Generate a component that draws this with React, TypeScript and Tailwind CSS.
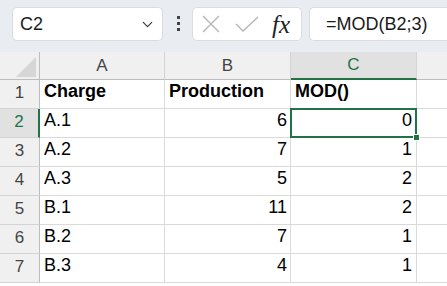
import { ChevronDown } from 'lucide-react'

const rows = [
  { a: 'Charge', b: 'Production', c: 'MOD()', head: true },
  { a: 'A.1', b: '6', c: '0' },
  { a: 'A.2', b: '7', c: '1' },
  { a: 'A.3', b: '5', c: '2' },
  { a: 'B.1', b: '11', c: '2' },
  { a: 'B.2', b: '7', c: '1' },
  { a: 'B.3', b: '4', c: '1' },
]

const cellFont = { fontFamily: '"Liberation Sans", Arial, sans-serif' }

export default function App() {
  return (
    <div className="h-[286px] w-[447px] overflow-hidden bg-white" style={cellFont}>
      {/* formula bar */}
      <div className="flex h-[52px] items-start bg-[#e9edf2] pt-[7px]">
        <div className="ml-[12px] flex h-[34px] w-[151px] items-center justify-between rounded-[5px] border border-[#d9dde2] bg-white pl-[7px] pr-[6px]">
          <span className="text-[18px] text-[#1a1a1a]">C2</span>
          <ChevronDown className="h-[17px] w-[17px] text-[#333]" strokeWidth={1.6} />
        </div>
        <div className="ml-[14px] mt-[9px] flex flex-col gap-[3px]">
          <span className="h-[3px] w-[3px] bg-[#444]" />
          <span className="h-[3px] w-[3px] bg-[#444]" />
          <span className="h-[3px] w-[3px] bg-[#444]" />
        </div>
        <div className="ml-[12px] flex h-[34px] w-[110px] items-center rounded-[5px] border border-[#d9dde2] bg-white pl-[8px]">
          <svg width="20" height="20" viewBox="0 0 20 20" className="text-[#b4b4b4]">
            <path d="M2 2L18 18M18 2L2 18" stroke="currentColor" strokeWidth="1.3" fill="none" />
          </svg>
          <svg width="26" height="18" viewBox="0 0 26 18" className="ml-[13px] text-[#b4b4b4]">
            <path d="M2 9L9 16L24 2" stroke="currentColor" strokeWidth="1.3" fill="none" />
          </svg>
          <span
            className="ml-[12px] text-[25px] italic leading-none text-[#222]"
            style={{ fontFamily: '"Liberation Serif", "Times New Roman", serif' }}
          >
            fx
          </span>
        </div>
        <div className="ml-[7px] flex h-[34px] flex-1 items-center rounded-l-[5px] border border-r-0 border-[#d9dde2] bg-white pl-[16px]">
          <span className="text-[18px] text-[#1a1a1a]">=MOD(B2;3)</span>
        </div>
      </div>

      {/* sheet */}
      <div className="grid grid-cols-[40px_125px_126px_126px_1fr] grid-rows-[28px_repeat(7,29px)_1fr]">
        <div className="relative border-b border-r border-[#bdbdbd] bg-[#f0f0f0]">
          <svg width="20" height="20" viewBox="0 0 20 20" className="absolute bottom-[2px] right-[3px]">
            <path d="M20 0L20 20L0 20Z" fill="#d6d6d6" />
          </svg>
        </div>
        {['A', 'B'].map((l) => (
          <div
            key={l}
            className="flex items-center justify-center border-b border-r border-[#d4d4d4] border-b-[#bdbdbd] bg-[#f0f0f0] text-[17px] text-[#444]"
          >
            {l}
          </div>
        ))}
        <div className="flex items-center justify-center border-b-2 border-r border-r-[#d4d4d4] border-b-[#217346] bg-[#e1e1e1] text-[17px] text-[#217346]">
          C
        </div>
        <div className="border-b border-[#bdbdbd] bg-[#f0f0f0]" />

        {rows.map((r, i) => {
          const n = i + 1
          const sel = n === 2
          const weight = r.head ? 'font-bold' : ''
          return [
            <div
              key={`h${n}`}
              className={`flex items-end justify-center border-b border-r pb-[3px] text-[17px] ${
                sel
                  ? 'border-b-[#d4d4d4] border-r-2 border-r-[#217346] bg-[#e1e1e1] text-[#217346]'
                  : 'border-b-[#d4d4d4] border-r-[#bdbdbd] bg-[#f0f0f0] text-[#444]'
              }`}
            >
              {n}
            </div>,
            <div
              key={`a${n}`}
              className={`flex items-end border-b border-r border-[#dadada] pb-[3px] pl-[4px] text-[18px] text-black ${weight}`}
            >
              {r.a}
            </div>,
            <div
              key={`b${n}`}
              className={`flex items-end border-b border-r border-[#dadada] pb-[3px] text-[18px] text-black ${
                r.head ? 'pl-[4px] font-bold' : 'justify-end pr-[3px]'
              }`}
            >
              {r.b}
            </div>,
            <div
              key={`c${n}`}
              className={`relative flex items-end border-b border-r border-[#dadada] pb-[3px] text-[18px] text-black ${
                r.head ? 'pl-[4px] font-bold' : 'justify-end pr-[4px]'
              } ${sel ? 'z-10' : ''}`}
            >
              {r.c}
              {sel && (
                <>
                  <div className="pointer-events-none absolute inset-[-1px] border-2 border-[#217346]" />
                  <div className="absolute bottom-[-4px] right-[-4px] h-[7px] w-[7px] border border-white bg-[#217346]" />
                </>
              )}
            </div>,
            <div key={`d${n}`} className="border-b border-[#dadada]" />,
          ]
        })}
        <div className="border-r border-[#bdbdbd] bg-[#f0f0f0]" />
        <div className="border-r border-[#dadada]" />
        <div className="border-r border-[#dadada]" />
        <div className="border-r border-[#dadada]" />
        <div />
      </div>
    </div>
  )
}
